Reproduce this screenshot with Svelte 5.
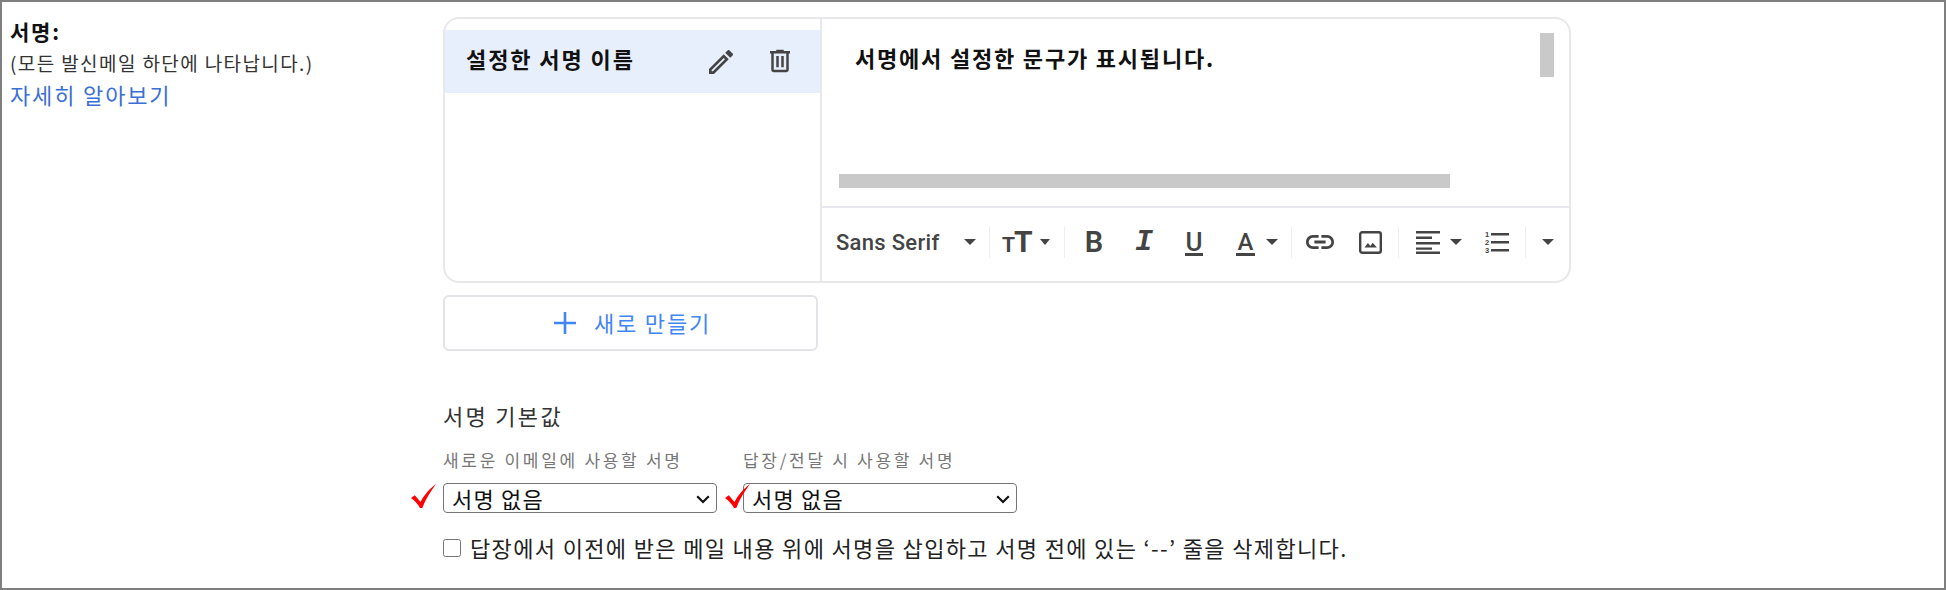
<script lang="ts">
    // toolbar cells between the separators
    const formatCells = ['bold', 'italic', 'underline'];
</script>

<div class="page">
    <div class="side">
        <div class="title">서명:</div>
        <div class="hint">(모든 발신메일 하단에 나타납니다.)</div>
        <a class="more" href="#more">자세히 알아보기</a>
    </div>

    <div class="main">
        <div class="card">
            <div class="list">
                <div class="item">
                    <span class="item-name">설정한 서명 이름</span>
                    <svg class="pencil" viewBox="0 0 24 24"><path d="M3 17.25V21h3.75L17.81 9.94l-3.75-3.75L3 17.25zM5.92 19H5v-.92l9.06-9.06.92.92L5.92 19zM20.71 5.63l-2.34-2.34c-.2-.2-.45-.29-.71-.29s-.51.1-.7.29l-1.83 1.83 3.75 3.75 1.83-1.83c.39-.39.39-1.02 0-1.41z"/></svg>
                    <svg class="trash" viewBox="0 0 24 24"><path d="M15 4V3H9v1H4v2h1v13c0 1.1.9 2 2 2h10c1.1 0 2-.9 2-2V6h1V4h-5zm2 15H7V6h10v13zM9 8h2v9H9V8zm4 0h2v9h-2V8z"/></svg>
                </div>
            </div>
            <div class="editor">
                <div class="editor-body">
                    <p>서명에서 설정한 문구가 표시됩니다.</p>
                    <span class="scroll-v"></span>
                    <span class="scroll-h"></span>
                </div>
                <div class="toolbar">
                    <div class="group font-group">
                        <span class="font-name">Sans Serif</span>
                        <span class="caret"></span>
                    </div>
                    <div class="group size-group">
                        <span class="tt"><span class="tt-small">T</span><span class="tt-big">T</span></span>
                        <span class="caret small"></span>
                    </div>
                    <div class="group format-group">
                        {#each formatCells as cell}
                            <span class="cell {cell}">{cell[0].toUpperCase()}</span>
                        {/each}
                        <span class="cell color"><span class="color-a">A</span></span>
                        <span class="caret"></span>
                    </div>
                    <div class="group insert-group">
                        <span class="cell">
                            <svg class="link" viewBox="2 7 20 10"><path d="M3.9 12c0-1.71 1.39-3.1 3.1-3.1h4V7H7c-2.76 0-5 2.24-5 5s2.24 5 5 5h4v-1.9H7c-1.71 0-3.1-1.39-3.1-3.1zM8 13h8v-2H8v2zm9-6h-4v1.9h4c1.71 0 3.1 1.39 3.1 3.1s-1.39 3.1-3.1 3.1h-4V17h4c2.76 0 5-2.24 5-5s-2.24-5-5-5z"/></svg>
                        </span>
                        <span class="cell">
                            <svg class="image" viewBox="0 0 23 23"><rect x="1.2" y="1.2" width="20.6" height="20.6" rx="2" fill="none" stroke="#444" stroke-width="2.4"/><path d="M5.5 16.5l3.4-4.6 2.5 3 2.3-3.2 4.2 4.8z"/></svg>
                        </span>
                    </div>
                    <div class="group para-group">
                        <svg class="align" viewBox="0 0 24 24"><path d="M0 1h24v2.4H0zM0 6.6h16v2.4H0zM0 12h24v2.4H0zM0 17.4h16v2.4H0zM0 21.6h24V24H0z"/></svg>
                        <span class="caret"></span>
                        <svg class="numbered" viewBox="0 0 24 24">
                            <text x="0" y="6.5" class="num">1</text>
                            <text x="0" y="14.5" class="num">2</text>
                            <text x="0" y="22.5" class="num">3</text>
                            <path d="M6 3h18v2.4H6zM6 11h18v2.4H6zM6 19h18v2.4H6z"/>
                        </svg>
                    </div>
                    <div class="group last-group">
                        <span class="caret"></span>
                    </div>
                </div>
            </div>
        </div>

        <button class="new-btn" type="button">
            <svg viewBox="0 0 22 22"><path d="M9.7 0h2.6v9.7H22v2.6h-9.7V22H9.7v-9.7H0V9.7h9.7z"/></svg>
            <span>새로 만들기</span>
        </button>

        <div class="defaults-title">서명 기본값</div>

        <div class="defaults">
            <div class="field">
                <span class="field-label">새로운 이메일에 사용할 서명</span>
                <div class="select-wrap">
                    <select><option>서명 없음</option></select>
                    <svg class="chevron" viewBox="0 0 14 9"><path d="M1.2 1.2L7 7l5.800-5.800" fill="none" stroke="#111" stroke-width="2.2"/></svg>
                    <svg class="check first" viewBox="0 0 26 24"><path d="M1 14l3.800-2.800L10.500 18C14 11 20 4.500 26 0 21 7 15.500 15 12.300 24H10C8 20 5 17 1 14z"/></svg>
                </div>
            </div>
            <div class="field">
                <span class="field-label">답장/전달 시 사용할 서명</span>
                <div class="select-wrap">
                    <select><option>서명 없음</option></select>
                    <svg class="chevron" viewBox="0 0 14 9"><path d="M1.2 1.2L7 7l5.800-5.800" fill="none" stroke="#111" stroke-width="2.2"/></svg>
                    <svg class="check second" viewBox="0 0 26 24"><path d="M1 14l3.800-2.800L10.500 18C14 11 20 4.500 26 0 21 7 15.500 15 12.300 24H10C8 20 5 17 1 14z"/></svg>
                </div>
            </div>
        </div>

        <label class="strip">
            <input type="checkbox" />
            <span>답장에서 이전에 받은 메일 내용 위에 서명을 삽입하고 서명 전에 있는 ‘--’ 줄을 삭제합니다.</span>
        </label>
    </div>
</div>

<style>
    :global(body) {
        margin: 0;
        background: #fff;
    }

    .page {
        box-sizing: border-box;
        width: 1946px;
        height: 590px;
        border: 2px solid #7f7f7f;
        padding: 15px 0 0 8px;
        display: grid;
        grid-template-columns: 433px 1fr;
        font-family: "Noto Sans CJK KR", "Noto Sans", sans-serif;
        color: #222;
        overflow: hidden;
    }

    .side {
        display: flex;
        flex-direction: column;
    }

    .title {
        font-size: 21px;
        font-weight: 700;
        letter-spacing: 1.8px;
        line-height: 28px;
        color: #111;
    }

    .hint {
        margin-top: 5px;
        font-size: 19px;
        letter-spacing: 1.4px;
        line-height: 26px;
        color: #333;
    }

    .more {
        margin-top: 3px;
        font-size: 22px;
        letter-spacing: 1.85px;
        line-height: 30px;
        color: #3b6fd6;
        text-decoration: none;
    }

    .card {
        box-sizing: border-box;
        display: flex;
        width: 1128px;
        height: 266px;
        border: 2px solid #e8e8ea;
        border-radius: 16px;
        overflow: hidden;
    }

    .list {
        box-sizing: border-box;
        width: 377px;
        padding-top: 11px;
        border-right: 2px solid #e8e8ea;
    }

    .item {
        box-sizing: border-box;
        display: flex;
        align-items: center;
        height: 63px;
        padding-left: 21px;
        background: #e8effc;
    }

    .item-name {
        width: 239px;
        font-size: 22px;
        font-weight: 700;
        letter-spacing: 1.9px;
        line-height: 28px;
        margin-top: -7px;
        color: #111;
        white-space: nowrap;
    }

    .pencil {
        width: 32px;
        height: 32px;
        fill: #444;
    }

    .trash {
        width: 30px;
        height: 30px;
        margin: -1px 0 0 28px;
        fill: #444;
    }

    .editor {
        flex: 1;
        display: flex;
        flex-direction: column;
    }

    .editor-body {
        position: relative;
        height: 187px;
        border-bottom: 2px solid #e8e8ee;
    }

    .editor-body p {
        margin: 0;
        padding: 24px 0 0 33px;
        font-size: 22px;
        font-weight: 700;
        letter-spacing: 1.8px;
        line-height: 28px;
        color: #111;
    }

    .scroll-v {
        position: absolute;
        top: 14px;
        right: 15px;
        width: 14px;
        height: 44px;
        background: #c9c9c9;
    }

    .scroll-h {
        position: absolute;
        top: 155px;
        left: 17px;
        width: 611px;
        height: 14px;
        background: #c9c9c9;
    }

    .toolbar {
        display: flex;
        align-items: center;
        flex: 1;
        padding: 0 0 4px 15px;
        margin-top: -1px;
    }

    .group {
        box-sizing: border-box;
        display: flex;
        align-items: center;
        height: 31px;
        border-right: 1px solid #eee;
        color: #444;
    }

    .font-group {
        padding-right: 13px;
    }

    .font-name {
        width: 128px;
        margin-left: -1px;
        font-family: Roboto, sans-serif;
        font-size: 22px;
        font-weight: 500;
        letter-spacing: 0.3px;
        color: #444;
    }

    .caret {
        flex: none;
        width: 0;
        height: 0;
        border-left: 6px solid transparent;
        border-right: 6px solid transparent;
        border-top: 6px solid #444;
    }

    .caret.small {
        border-left-width: 5.5px;
        border-right-width: 5.5px;
    }

    .size-group {
        padding: 0 14px;
    }

    .tt {
        display: flex;
        align-items: baseline;
        width: 27px;
        margin: 0 9px 0 -2px;
        padding-right: 2px;
        font-family: Roboto, sans-serif;
        font-weight: 700;
        height: 26px;
        line-height: 26px;
    }

    .tt-small {
        font-size: 21px;
    }

    .tt-big {
        font-size: 30px;
        margin-left: -1px;
    }

    .format-group {
        padding: 0 13px 0 4px;
    }

    .cell {
        display: flex;
        align-items: center;
        justify-content: center;
        width: 50px;
        height: 31px;
    }

    .bold,
    .underline {
        font-family: Roboto, sans-serif;
        font-size: 29px;
        font-weight: 600;
    }

    .italic {
        font-family: "Liberation Mono", monospace;
        font-size: 30px;
        font-weight: 700;
        font-style: italic;
    }

    .underline {
        font-weight: 500;
        font-size: 26px;
        line-height: 22px;
        height: 22px;
        position: relative;
    }

    .underline::after {
        content: '';
        position: absolute;
        left: 16px;
        right: 16px;
        bottom: -3px;
        height: 3px;
        background: #444;
    }

    .color {
        box-sizing: border-box;
        width: 47px;
        padding-left: 6px;
    }

    .color-a {
        font-family: Roboto, sans-serif;
        font-size: 24px;
        font-weight: 500;
        line-height: 22px;
        padding: 0 2px;
        border-bottom: 3px solid #444;
        margin-top: 2px;
    }

    .insert-group {
        padding: 0 3px;
    }

    .link {
        width: 28px;
        height: 14px;
        fill: #444;
    }

    .image {
        width: 23px;
        height: 23px;
        fill: #444;
    }

    .para-group {
        padding: 0 16px 0 17px;
    }

    .align {
        width: 24px;
        height: 24px;
        margin-right: 10px;
        fill: #444;
    }

    .numbered {
        width: 24px;
        height: 24px;
        margin-left: 23px;
        fill: #444;
    }

    .num {
        font-family: "Liberation Sans", sans-serif;
        font-size: 7.5px;
        font-weight: 700;
    }

    .last-group {
        padding-left: 16px;
        border-right: none;
    }

    .new-btn {
        box-sizing: border-box;
        display: flex;
        align-items: center;
        justify-content: center;
        gap: 18px;
        width: 375px;
        height: 56px;
        margin-top: 12px;
        padding: 0 0 0 4px;
        background: #fff;
        border: 2px solid #e4e4e8;
        border-radius: 6px;
        font-family: inherit;
        font-size: 22px;
        letter-spacing: 1.8px;
        color: #4285f4;
    }

    .new-btn span {
        margin-top: -3px;
    }

    .new-btn svg {
        width: 22px;
        height: 22px;
        fill: #4285f4;
    }

    .defaults-title {
        margin-top: 52px;
        font-size: 22px;
        letter-spacing: 2.3px;
        line-height: 24px;
        color: #333;
    }

    .defaults {
        display: flex;
        gap: 26px;
        margin-top: 23px;
    }

    .field {
        display: flex;
        flex-direction: column;
        width: 274px;
    }

    .field-label {
        font-size: 17px;
        letter-spacing: 2.7px;
        line-height: 20px;
        color: #777;
        white-space: nowrap;
    }

    .select-wrap {
        position: relative;
        margin-top: 13px;
    }

    select {
        box-sizing: border-box;
        display: block;
        appearance: none;
        width: 274px;
        height: 30px;
        padding: 0 0 0 8px;
        font-family: inherit;
        font-size: 22px;
        line-height: 24px;
        letter-spacing: 1.2px;
        color: #111;
        background: #fff;
        border: 1px solid #767676;
        border-radius: 4px;
    }

    .chevron {
        position: absolute;
        top: 12px;
        right: 7px;
        width: 14px;
        height: 9px;
        pointer-events: none;
    }

    .check {
        position: absolute;
        top: 1px;
        width: 26px;
        height: 24px;
        fill: #f00;
    }

    .check.first {
        left: -33px;
    }

    .check.second {
        left: -19px;
    }

    .strip {
        display: flex;
        align-items: center;
        gap: 9px;
        margin-top: 22px;
        font-size: 22px;
        letter-spacing: 1.35px;
        line-height: 28px;
        color: #222;
        white-space: nowrap;
    }

    .strip span {
        margin-top: -2px;
    }

    .strip input {
        width: 18px;
        height: 18px;
        margin: 0;
    }
</style>
